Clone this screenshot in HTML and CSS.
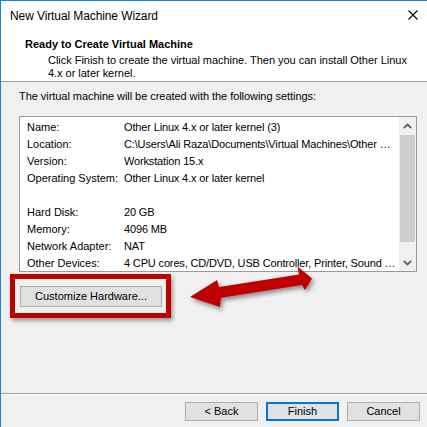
FILE: index.html
```html
<!DOCTYPE html>
<html lang="en">
<head>
<meta charset="utf-8">
<title>New Virtual Machine Wizard</title>
<link rel="stylesheet" href="styles.css">
</head>
<body>
<div class="window">
  <div class="titlebar">
    <span class="title">New Virtual Machine Wizard</span>
    <svg class="close" width="10" height="10" viewBox="0 0 10 10"><path d="M0.5 0.5 L9.5 9.5 M9.5 0.5 L0.5 9.5" stroke="#000" stroke-width="1.1" fill="none"/></svg>
  </div>
  <div class="header">
    <div class="h-title">Ready to Create Virtual Machine</div>
    <div class="h-sub">Click Finish to create the virtual machine. Then you can install Other Linux<br>4.x or later kernel.</div>
  </div>
  <div class="content">
    <p class="intro">The virtual machine will be created with the following settings:</p>
    <div class="listbox">
      <div class="rows">
        <div class="row"><span class="k">Name:</span><span class="v">Other Linux 4.x or later kernel (3)</span></div>
        <div class="row"><span class="k">Location:</span><span class="v">C:\Users\Ali Raza\Documents\Virtual Machines\Other Linux 4.x or later kernel (3)</span></div>
        <div class="row"><span class="k">Version:</span><span class="v">Workstation 15.x</span></div>
        <div class="row"><span class="k">Operating System:</span><span class="v">Other Linux 4.x or later kernel</span></div>
        <div class="row"></div>
        <div class="row"><span class="k">Hard Disk:</span><span class="v">20 GB</span></div>
        <div class="row"><span class="k">Memory:</span><span class="v">4096 MB</span></div>
        <div class="row"><span class="k">Network Adapter:</span><span class="v">NAT</span></div>
        <div class="row"><span class="k">Other Devices:</span><span class="v">4 CPU cores, CD/DVD, USB Controller, Printer, Sound Card</span></div>
      </div>
      <div class="scrollbar">
        <div class="sb-btn">
          <svg width="9" height="6" viewBox="0 0 9 6"><path d="M0.8 5.2 L4.5 1.5 L8.2 5.2" stroke="#606060" stroke-width="1.8" fill="none"/></svg>
        </div>
        <div class="sb-track"><div class="sb-thumb"></div></div>
        <div class="sb-btn">
          <svg width="9" height="6" viewBox="0 0 9 6"><path d="M0.8 0.8 L4.5 4.5 L8.2 0.8" stroke="#606060" stroke-width="1.8" fill="none"/></svg>
        </div>
      </div>
    </div>
    <div class="custom-wrap">
      <button class="btn custom">Customize Hardware...</button>
      <div class="highlight"></div>
    </div>
  </div>
  <div class="footer">
    <button class="btn">&lt; Back</button>
    <button class="btn primary">Finish</button>
    <button class="btn">Cancel</button>
  </div>
</div>
<svg class="arrow" width="427" height="427" viewBox="0 0 427 427">
  <polygon points="190,297 217,280 219,287 299,274.5 297.5,266.5 312,278.5 305,290 302,285 221,297.7 220,307" fill="#c00000"/>
</svg>
</body>
</html>
```

FILE: styles.css
```css
html, body {
  margin: 0;
  padding: 0;
  background: #f0f0f0;
}
body {
  width: 427px;
  height: 427px;
  overflow: hidden;
  position: relative;
  font-family: "Liberation Sans", Arial, sans-serif;
  font-size: 11px;
  color: #000;
}
.window {
  border-top: 1px solid #1883d7;
  border-left: 1px solid #1883d7;
  width: 426px;
  height: 426px;
  background: #f0f0f0;
  display: flex;
  flex-direction: column;
}
.titlebar {
  height: 29px;
  background: #fff;
  display: flex;
  align-items: flex-start;
  justify-content: space-between;
  padding: 8px 9px 0 9px;
  box-sizing: border-box;
}
.title {
  font-size: 12px;
  line-height: 15px;
  letter-spacing: -0.1px;
}
.close {
  margin-top: 1px;
}
.header {
  background: #fff;
  height: 52px;
  box-sizing: border-box;
  padding: 8px 0 0 24px;
  border-bottom: 1px solid #a0a0a0;
}
.h-title {
  font-weight: bold;
  line-height: 13px;
}
.h-sub {
  margin-top: 3px;
  padding-left: 23px;
  line-height: 13px;
  letter-spacing: -0.03px;
}
.content {
  height: 311px;
  box-sizing: border-box;
  padding: 8px 0 0 18px;
}
.intro {
  margin: 0;
  line-height: 13px;
  letter-spacing: -0.05px;
}
.listbox {
  margin-top: 13px;
  width: 398px;
  height: 156px;
  box-sizing: border-box;
  border: 1px solid #9a9a9a;
  background: #fff;
  display: flex;
}
.rows {
  flex: 1;
  min-width: 0;
  padding: 2px 3px 0 7px;
}
.row {
  display: flex;
  height: 17px;
  line-height: 17px;
  white-space: nowrap;
}
.k {
  width: 97px;
  flex: none;
}
.v {
  flex: 1;
  min-width: 0;
  overflow: hidden;
  text-overflow: ellipsis;
  letter-spacing: -0.15px;
}
.scrollbar {
  width: 17px;
  background: #f0f0f0;
  display: flex;
  flex-direction: column;
}
.sb-btn {
  height: 17px;
  display: flex;
  align-items: center;
  justify-content: center;
}
.sb-track {
  flex: 1;
  padding: 1px 1px 0 1px;
}
.sb-thumb {
  height: 107px;
  background: #cdcdcd;
}
.custom-wrap {
  position: relative;
  margin-top: 14px;
  margin-left: 1px;
  width: 142px;
}
.btn {
  font-family: "Liberation Sans", Arial, sans-serif;
  font-size: 11px;
  color: #000;
  background: #e1e1e1;
  border: 1px solid #adadad;
  padding: 0;
  margin: 0;
  box-sizing: border-box;
}
.custom {
  width: 142px;
  height: 21px;
  line-height: 19px;
}
.highlight {
  position: absolute;
  left: -10px;
  top: -12px;
  width: 161px;
  height: 44px;
  box-sizing: border-box;
  border: 5px solid #c00000;
  box-shadow: 2px 3px 4px rgba(0, 0, 0, 0.35);
}
.footer {
  flex: 1;
  border-top: 1px solid #a0a0a0;
  box-shadow: inset 0 1px 0 #fff;
  display: flex;
  justify-content: flex-end;
  align-items: flex-start;
  gap: 8px;
  padding: 8px 7px 0 0;
}
.footer .btn {
  width: 73px;
  height: 19px;
  line-height: 17px;
}
.footer .primary {
  border: 2px solid #0078d7;
  line-height: 15px;
}
.arrow {
  position: absolute;
  left: 0;
  top: 0;
  pointer-events: none;
  filter: drop-shadow(2px 3px 2px rgba(0, 0, 0, 0.4));
}
```
